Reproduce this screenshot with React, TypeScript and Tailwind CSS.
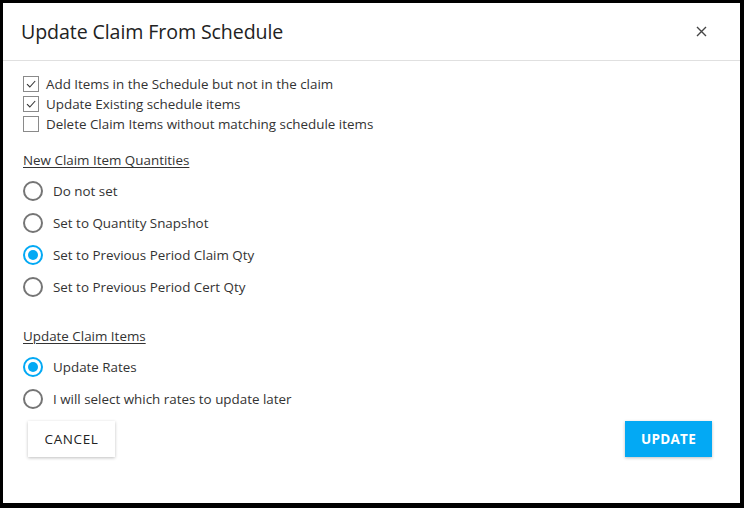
import React from "react";

function Checkbox({ checked }: { checked: boolean }) {
  return (
    <span className="w-4 h-4 border border-[#8a8a8a] bg-white flex items-center justify-center shrink-0">
      {checked && (
        <svg width="12" height="12" viewBox="0 0 12 12">
          <path d="M2 6.2 L4.8 9 L10.2 3" fill="none" stroke="#333" strokeWidth="1.1" />
        </svg>
      )}
    </span>
  );
}

function Radio({ checked }: { checked: boolean }) {
  return (
    <span
      className={
        "w-5 h-5 rounded-full border-2 flex items-center justify-center shrink-0 " +
        (checked ? "border-[#03a9f4]" : "border-[#757575]")
      }
    >
      {checked && <span className="w-[10px] h-[10px] rounded-full bg-[#03a9f4]" />}
    </span>
  );
}

export default function App() {
  const font = { fontFamily: '"Open Sans", "Noto Sans", sans-serif' };
  return (
    <div className="w-[744px] h-[508px] bg-black pt-[3px] pl-[3px] pr-[4px] pb-[5px]" style={font}>
      <div className="w-full h-full bg-white flex flex-col">
        <div className="h-[57px] flex items-center justify-between pl-[18px] pr-[33px] border-b border-[#e0e0e0] box-content">
          <span className="text-[19.6px] text-[#222] tracking-[-0.1px] mt-[1px]">Update Claim From Schedule</span>
          <svg width="11" height="11" viewBox="0 0 11 11">
            <path d="M1 1 L10 10 M10 1 L1 10" stroke="#444" strokeWidth="1.4" />
          </svg>
        </div>
        <div className="flex flex-col pl-5 pt-[13px] text-[13.4px] text-[#333]">
          {[
            ["Add Items in the Schedule but not in the claim", true],
            ["Update Existing schedule items", true],
            ["Delete Claim Items without matching schedule items", false],
          ].map(([t, c]) => (
            <div key={t as string} className="h-5 flex items-center gap-[7px]">
              <Checkbox checked={c as boolean} />
              <span>{t as string}</span>
            </div>
          ))}
          <div className="h-5 mt-4 flex items-center underline underline-offset-2">New Claim Item Quantities</div>
          <div className="mt-[5px] flex flex-col">
            {[
              ["Do not set", false],
              ["Set to Quantity Snapshot", false],
              ["Set to Previous Period Claim Qty", true],
              ["Set to Previous Period Cert Qty", false],
            ].map(([t, c]) => (
              <div key={t as string} className="h-8 flex items-center gap-[10px]">
                <Radio checked={c as boolean} />
                <span>{t as string}</span>
              </div>
            ))}
          </div>
          <div className="h-5 mt-[23px] flex items-center underline underline-offset-2">Update Claim Items</div>
          <div className="mt-[5px] flex flex-col">
            {[
              ["Update Rates", true],
              ["I will select which rates to update later", false],
            ].map(([t, c]) => (
              <div key={t as string} className="h-8 flex items-center gap-[10px]">
                <Radio checked={c as boolean} />
                <span>{t as string}</span>
              </div>
            ))}
          </div>
        </div>
        <div className="mt-[6px] flex justify-between pl-[25px] pr-[28px]">
          <button className="w-[87px] h-9 bg-white text-[#222] text-[13.5px] font-medium tracking-[0.6px] shadow-[0_1px_3px_rgba(0,0,0,0.25)]">
            CANCEL
          </button>
          <button className="w-[87px] h-9 bg-[#03a9f4] text-white text-[13.5px] font-bold tracking-[0.3px] shadow-[0_1px_3px_rgba(0,0,0,0.25)]">
            UPDATE
          </button>
        </div>
      </div>
    </div>
  );
}
